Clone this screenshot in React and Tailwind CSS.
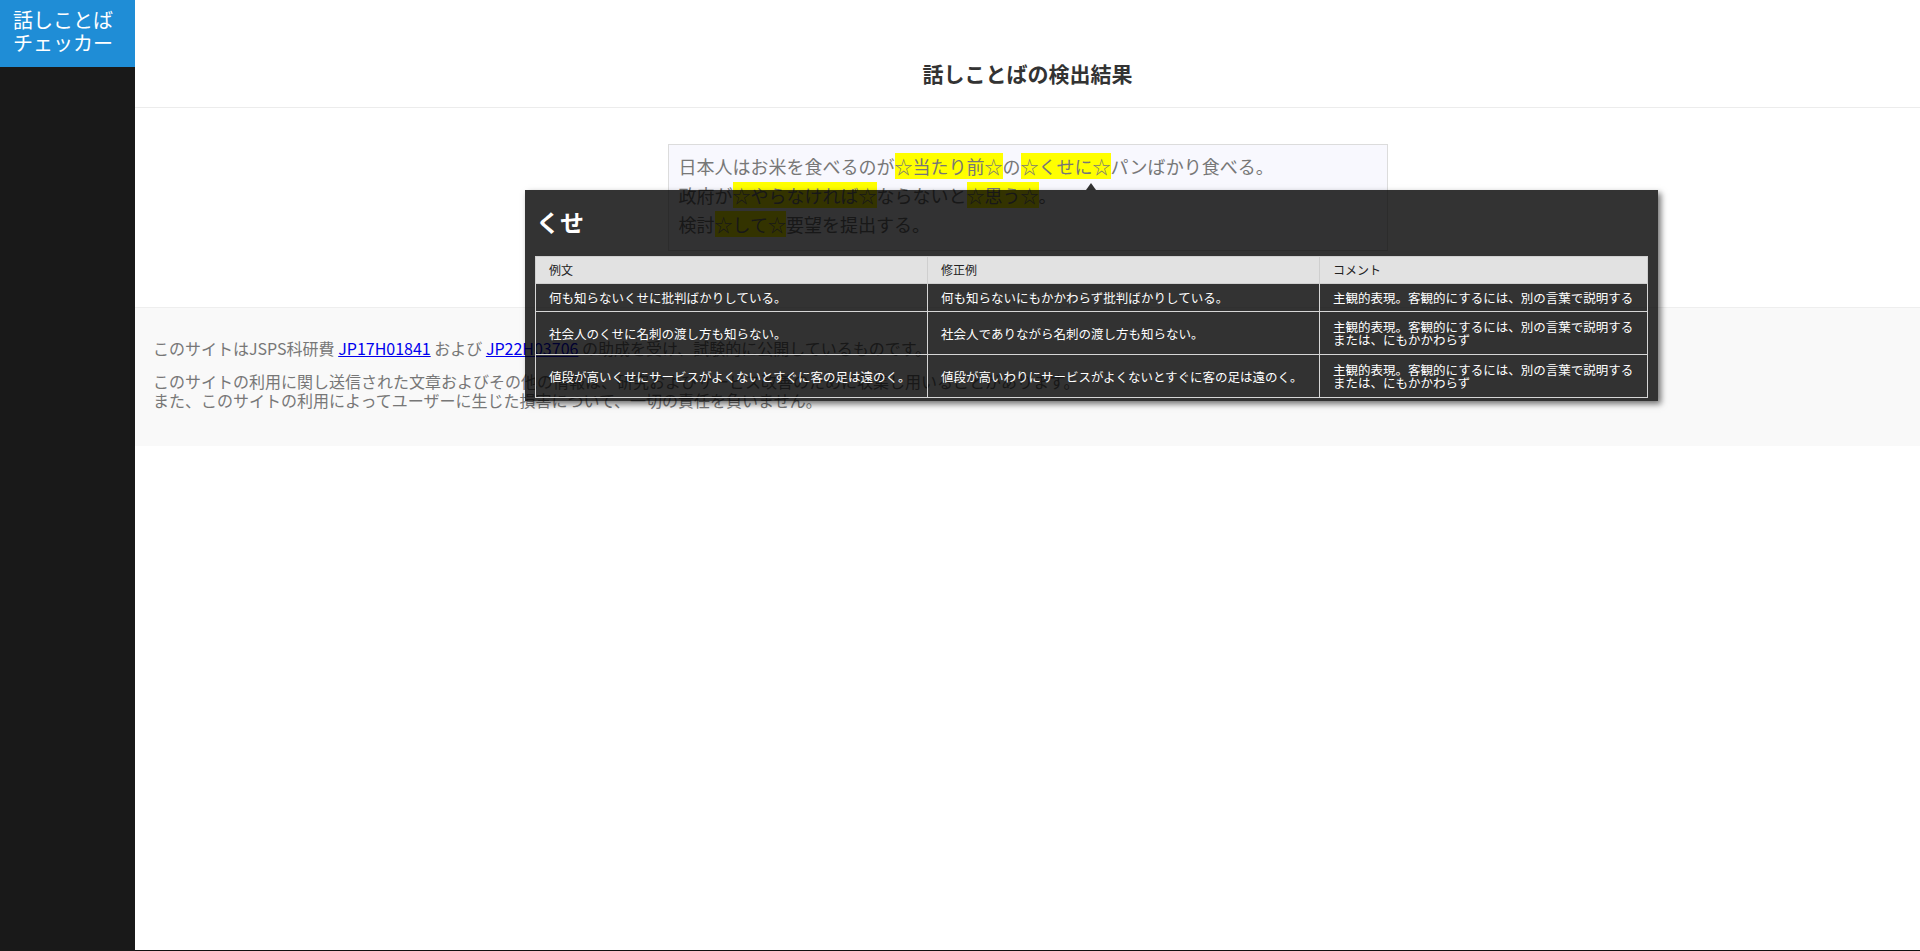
import React from "react";

const rows = [
  {
    ex: "何も知らないくせに批判ばかりしている。",
    fix: "何も知らないにもかかわらず批判ばかりしている。",
    note: ["主観的表現。客観的にするには、別の言葉で説明する"],
    h: "h-[28px]",
  },
  {
    ex: "社会人のくせに名刺の渡し方も知らない。",
    fix: "社会人でありながら名刺の渡し方も知らない。",
    note: ["主観的表現。客観的にするには、別の言葉で説明する", "または、にもかかわらず"],
    h: "h-[43px]",
  },
  {
    ex: "値段が高いくせにサービスがよくないとすぐに客の足は遠のく。",
    fix: "値段が高いわりにサービスがよくないとすぐに客の足は遠のく。",
    note: ["主観的表現。客観的にするには、別の言葉で説明する", "または、にもかかわらず"],
    h: "h-[43px]",
  },
];

const Mark = ({ children }) => <span className="bg-[#ffff00]">{children}</span>;

const Popup = () => (
  <div className="absolute left-[525px] top-[190px] w-[1133px] bg-black/80 px-[10px] pt-[14px] pb-[3px] shadow-[3px_3px_6px_rgba(0,0,0,0.55)]">
    {/* arrow */}
    <div className="absolute -top-[7px] left-[561px] h-0 w-0 border-x-[5px] border-b-[7px] border-x-transparent border-b-black/80" />
    <h2 className="mb-[16px] pl-[1px] text-[24px] font-bold leading-[36px] text-white">くせ</h2>
    <table className="w-[1113px] border-collapse text-left">
      <thead>
        <tr className="h-[27px] bg-[#e2e2e2] text-[12px] text-[#222]">
          <th className="w-[392px] border border-[#cfcfcf] px-[13px] font-normal">例文</th>
          <th className="w-[392px] border border-[#cfcfcf] px-[13px] font-normal">修正例</th>
          <th className="border border-[#cfcfcf] px-[13px] font-normal">コメント</th>
        </tr>
      </thead>
      <tbody className="text-[12.5px] leading-[13px] text-white">
        {rows.map((r, i) => (
          <tr key={i} className={r.h}>
            <td className="border border-[#d6d6d6] px-[13px] align-middle">{r.ex}</td>
            <td className="border border-[#d6d6d6] px-[13px] align-middle">{r.fix}</td>
            <td className="whitespace-nowrap border border-[#d6d6d6] pl-[13px] pr-[6px] align-middle">
              {r.note.map((n, j) => (
                <div key={j}>{n}</div>
              ))}
            </td>
          </tr>
        ))}
      </tbody>
    </table>
  </div>
);

export default function App() {
  return (
    <div className="relative flex h-[951px] font-['Noto_Sans_CJK_JP',sans-serif]">
      <aside className="w-[135px] shrink-0 bg-[#191919]">
        <div className="h-[67px] bg-[#1f8dd6] px-[13px] pt-[8px] text-[20px] leading-[23px] text-white">
          話しことば
          <br />
          チェッカー
        </div>
      </aside>

      <main className="flex min-w-0 flex-1 flex-col bg-white">
        <header className="h-[108px] border-b border-[#ececec] pt-[57px] text-center text-[21px] font-bold leading-[32px] text-[#333]">
          話しことばの検出結果
        </header>

        <section className="flex justify-center pt-[36px] pb-[56px]">
          <div className="w-[720px] border border-[#dcdcdc] bg-[#f8f8fe] px-[10px] pt-[7px] pb-[11px] text-[18px] leading-[29px] text-[#777]">
            <div>
              日本人はお米を食べるのが<Mark>☆当たり前☆</Mark>の<Mark>☆くせに☆</Mark>パンばかり食べる。
            </div>
            <div>
              政府が<Mark>☆やらなければ☆</Mark>ならないと<Mark>☆思う☆</Mark>。
            </div>
            <div>
              検討<Mark>☆して☆</Mark>要望を提出する。
            </div>
          </div>
        </section>

        <footer className="border-t border-[#eeeeee] bg-[#f9f9f9] px-[18px] pt-[31px] pb-[36px] text-[16px] leading-[19px] text-[#777]">
          <p className="mb-[14px]">
            このサイトはJSPS科研費{" "}
            <a href="#" className="text-[#0000ee] underline">
              JP17H01841
            </a>{" "}
            および{" "}
            <a href="#" className="text-[#0000ee] underline">
              JP22H03706
            </a>{" "}
            の助成を受け、試験的に公開しているものです。
          </p>
          <p>
            このサイトの利用に関し送信された文章およびその他の情報は、研究およびサービス改善のために収集し用いることがあります。
            <br />
            また、このサイトの利用によってユーザーに生じた損害について、一切の責任を負いません。
          </p>
        </footer>

        <div className="flex-1" />
        <div className="h-px bg-[#111]" />
      </main>

      <Popup />
    </div>
  );
}
